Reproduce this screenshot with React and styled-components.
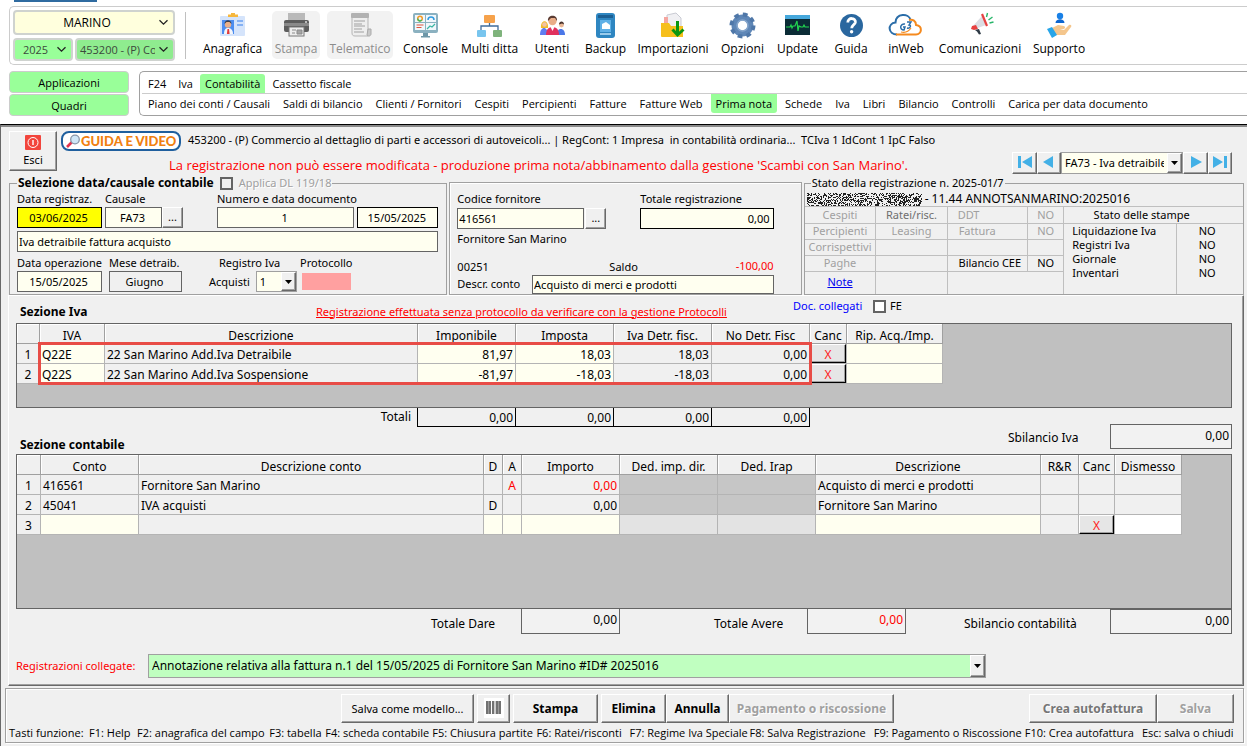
import React, { useState } from 'react';
import styled, { createGlobalStyle, css } from 'styled-components';

const GlobalStyle = createGlobalStyle`
  * {
    box-sizing: border-box;
  }
  body {
    margin: 0;
    background: #fff;
    color: #000;
    font-family: 'Open Sans', 'Noto Sans', sans-serif;
    font-size: 11px;
    line-height: 14px;
    overflow-x: hidden;
  }
  button, input, select {
    font: inherit;
    color: inherit;
    margin: 0;
    border-radius: 0;
  }
`;

/* ---------- top area ---------- */

const TopAccent = styled.div`
  width: 83px;
  height: 2px;
  margin: 0 0 4px 14px;
  background: #2f6ba0;
`;

const Toolbar = styled.header`
  display: flex;
  height: 59px;
  margin-left: 9px;
  padding: 3px 0 0 3px;
  border: 1px solid #ccc;
  border-right: none;
  border-radius: 5px 0 0 5px;
`;

const Selectors = styled.div`
  display: grid;
  grid-template-columns: 60px 100px;
  gap: 3px 2px;
  width: 162px;
  align-content: start;
`;

const PickBox = styled.span`
  display: grid;
  align-items: center;
  grid-column: ${({ $wide }) => ($wide ? '1 / 3' : 'auto')};
  height: ${({ $wide }) => ($wide ? '25px' : '23px')};
  border: 2px solid #cfd3cf;
  border-radius: 4px;
  background: ${({ $bg }) => $bg};
  svg {
    grid-area: 1 / 1;
    justify-self: end;
    margin-right: 4px;
    pointer-events: none;
  }
`;

const PickSelect = styled.select`
  grid-area: 1 / 1;
  appearance: none;
  border: none;
  background: transparent;
  width: 100%;
  min-width: 0;
  height: 19px;
  padding: 0 18px 0 ${({ $pad }) => $pad || 4}px;
  color: ${({ $dark }) => ($dark ? '#000' : '#3c4a3c')};
  font-size: ${({ $dark }) => ($dark ? 12 : 11)}px;
  text-align-last: ${({ $dark }) => ($dark ? 'center' : 'left')};
`;

const Divider = styled.span`
  width: 1px;
  height: 47px;
  margin: 2px 14px 0 10px;
  background: #c0c0c0;
`;

const ToolList = styled.nav`
  display: flex;
  gap: 7px;
  padding-top: 1px;
`;

const Tool = styled.button`
  display: flex;
  flex-direction: column;
  align-items: center;
  justify-content: space-between;
  width: ${({ $w }) => $w}px;
  height: 48px;
  padding: 1px 0 3px;
  border: none;
  border-radius: 5px;
  background: ${({ disabled }) => (disabled ? '#f2f2f2' : 'transparent')};
  color: ${({ disabled }) => (disabled ? '#8c8c8c' : '#000')};
  font-size: 12px;
  white-space: nowrap;
`;

const NavArea = styled.div`
  display: flex;
  gap: 10px;
  margin: 6px 0 8px 9px;
`;

const SideButtons = styled.div`
  display: flex;
  flex-direction: column;
  gap: 1px;
  width: 120px;
`;

const SideButton = styled.button`
  height: 22px;
  padding: 1px 0 0;
  border: 1px solid #ccc;
  border-radius: 4px;
  background: #99ff99;
`;

const TabBox = styled.div`
  flex: 1;
  height: 45px;
  padding-top: 2px;
  border: 1px solid #a0a0a0;
  border-right: none;
  border-radius: 5px 0 0 5px;
`;

const TabRow = styled.nav`
  display: flex;
  gap: ${({ $line }) => ($line ? 2 : 3)}px;
  margin-left: 2px;
  padding-left: 1px;
  border-bottom: ${({ $line }) => ($line ? '1px solid #ccc' : 'none')};
`;

const Tab = styled.a`
  padding: 3px 5px 2px;
  border-radius: ${({ $low }) => ($low ? '0 0 3px 3px' : '3px 3px 0 0')};
  background: ${({ $active }) => ($active ? '#99ff99' : 'transparent')};
  color: #000;
  text-decoration: none;
  white-space: nowrap;
`;

/* ---------- work area ---------- */

const Work = styled.main`
  padding: 4px 3px 3px 4px;
  background: #f0f0f0;
  border-top: 1px solid #000;
  border-left: 1px solid #696969;
  box-shadow: inset 0 2px 0 #8a8a8a;
  font-family: 'Noto Sans', 'Open Sans', sans-serif;
`;

const raised = css`
  border: 1px solid;
  border-color: #fff #696969 #696969 #fff;
  box-shadow: inset -1px -1px 0 #a0a0a0;
  background: #f0f0f0;
`;

const Head = styled.div`
  display: flex;
  gap: 4px;
  height: 45px;
  padding: 2px 12px 0 4px;
`;

const ExitButton = styled.button`
  ${raised}
  display: flex;
  flex-direction: column;
  align-items: center;
  justify-content: space-between;
  width: 48px;
  height: 40px;
  padding: 3px 0;
`;

const HeadMain = styled.div`
  flex: 1;
  min-width: 0;
`;

const HeadLine = styled.div`
  display: flex;
  align-items: ${({ $big }) => ($big ? 'center' : 'flex-start')};
  height: 21px;
  gap: 7px;
  line-height: 18px;
  white-space: pre;
`;

const GuideLink = styled.a`
  display: flex;
  align-items: center;
  width: 120px;
  height: 20px;
  padding-left: 3px;
  border: 2px solid #1f5f9e;
  border-radius: 8px;
  background: #fff;
  color: #f08010;
  font: 900 13px/16px Lato, sans-serif;
  text-decoration: none;
`;

const Warning = styled.strong`
  flex: 1;
  padding: 4px 0 0 108px;
  color: #f00;
  font-family: 'Open Sans', 'Noto Sans', sans-serif;
  font-size: 13px;
  font-weight: 400;
`;

const RecordNav = styled.div`
  display: flex;
  height: 22px;
`;

const FlatButton = styled.button`
  ${raised}
  display: flex;
  align-items: center;
  justify-content: center;
  width: ${({ $w }) => $w}px;
  height: ${({ $h }) => $h || 21}px;
  padding: 0 0 2px;
  flex: none;
`;

const Combo = styled.span`
  display: grid;
  align-items: center;
  width: ${({ $w }) => ($w ? $w + 'px' : 'auto')};
  flex: ${({ $grow }) => ($grow ? '0 1 838px' : 'none')};
  height: ${({ $h }) => $h}px;
  border: 1px solid;
  border-color: #696969 #fff #fff #696969;
  outline: ${({ $sunken }) => ($sunken ? '1px solid #a0a0a0' : 'none')};
  outline-offset: -1px;
  background: ${({ $bg }) => $bg || '#fffff0'};
`;

const ComboSelect = styled.select`
  grid-area: 1 / 1;
  appearance: none;
  width: 100%;
  min-width: 0;
  height: 100%;
  padding: 0 18px 0 3px;
  border: none;
  background: transparent;
  font-size: ${({ $size }) => $size || 11}px;
`;

const ComboArrow = styled.span`
  ${raised}
  grid-area: 1 / 1;
  justify-self: end;
  display: flex;
  align-items: center;
  justify-content: center;
  width: 15px;
  height: 100%;
  pointer-events: none;
`;

const Panels = styled.div`
  display: grid;
  grid-template-columns: 438fr 352fr 440fr;
  gap: 2px;
  padding-left: 4px;
`;

const Panel = styled.fieldset`
  min-width: 0;
  margin: ${({ $plain }) => ($plain ? '8px 0 0' : '0')};
  padding: ${({ $pad }) => $pad || '0 8px 2px 7px'};
  border: 1px solid #a0a0a0;
  box-shadow: ${({ $plain }) => ($plain ? 'inset 1px 1px 0 #fff' : 'none')};
`;

const Legend = styled.legend`
  display: flex;
  align-items: center;
  gap: 6px;
  height: 18px;
  padding: 0 1px;
  margin-left: ${({ $left }) => $left || 0}px;
  white-space: nowrap;
`;

const Line = styled.div`
  display: flex;
  align-items: ${({ $align }) => $align || 'flex-end'};
  gap: ${({ $gap }) => $gap ?? 3}px;
  margin-top: ${({ $top }) => $top || 0}px;
`;

const Field = styled.div`
  display: flex;
  flex-direction: column;
  width: ${({ $w }) => ($w ? $w + 'px' : 'auto')};
  flex: ${({ $w }) => ($w ? 'none' : 1)};
  min-width: 0;
  margin-left: ${({ $left }) => $left || 0}px;
`;

const Label = styled.label`
  height: ${({ $h }) => $h || 15}px;
  padding-left: ${({ $indent }) => $indent || 0}px;
  line-height: 14px;
  white-space: nowrap;
  text-align: ${({ $align }) => $align || 'left'};
  color: ${({ $color }) => $color || '#000'};
`;

const Input = styled.input`
  display: block;
  width: 100%;
  min-width: 0;
  height: ${({ $h }) => $h || 21}px;
  padding: 0 3px 0 1px;
  border: 1px solid ${({ $strong }) => ($strong ? '#000' : '#646464')};
  background: ${({ $bg }) => $bg || '#fffff0'};
  text-align: ${({ $align }) => $align || 'left'};
`;

const Check = styled.input`
  appearance: none;
  flex: none;
  width: 13px;
  height: 13px;
  border: 2px solid #646464;
  background: ${({ disabled }) => (disabled ? '#f0f0f0' : '#fff')};
`;

const CheckLabel = styled.label`
  color: ${({ $off }) => ($off ? '#a0a0a0' : '#000')};
  text-shadow: ${({ $off }) => ($off ? '1px 1px 0 #fff' : 'none')};
`;

const Protocol = styled.output`
  display: block;
  width: 49px;
  height: 17px;
  margin: 2px 0 2px 2px;
  background: #ffa0a0;
`;

const StatusLine = styled.div`
  display: flex;
  align-items: center;
  gap: 3px;
  height: 14px;
  padding-left: 2px;
  font-size: 12px;
  white-space: nowrap;
`;

const StatusGrid = styled.div`
  display: grid;
  grid-template-columns: 260fr 179fr;
  border-top: 1px solid #bfbfbf;
`;

const StatusTable = styled.table`
  width: 100%;
  table-layout: fixed;
  border-collapse: collapse;
  td {
    height: 16px;
    padding: 0;
    border-right: 1px solid #bfbfbf;
    border-bottom: 1px solid #bfbfbf;
    color: #a0a0a0;
    text-align: center;
    line-height: 14px;
    white-space: nowrap;
  }
  tr:last-child td {
    height: 23px;
    padding-bottom: 2px;
    border-bottom: none;
  }
`;

const StatusCell = styled.td`
  && {
    color: ${({ $color }) => $color || '#a0a0a0'};
    text-align: ${({ $align }) => $align || 'center'};
    padding-left: ${({ $pad }) => $pad || 0}px;
  }
`;

const PrintTable = styled.table`
  width: 100%;
  height: 87px;
  table-layout: fixed;
  border-collapse: collapse;
  th {
    height: 16px;
    padding: 0 24px 0 0;
    border-bottom: 1px solid #bfbfbf;
    font-weight: 400;
  }
  td {
    height: 14px;
    padding: 0 0 0 8px;
    line-height: 14px;
  }
  td:last-child {
    padding: 0 6px 0 0;
    border-left: 1px solid #bfbfbf;
    text-align: center;
  }
`;

/* ---------- sections ---------- */

const Sections = styled.section`
  margin-left: 3px;
  padding: 0 11px 7px 7px;
  border: 1px solid;
  border-color: #fff #696969 #696969 #fff;
  box-shadow: inset -1px -1px 0 #a0a0a0;
`;

const SectionHead = styled.div`
  display: flex;
  align-items: center;
  height: 27px;
  padding-top: 4px;
`;

const SectionTitle = styled.h2`
  margin: 0;
  padding-left: ${({ $pad }) => $pad ?? 4}px;
  font-size: 12px;
  line-height: 18px;
  font-weight: 700;
  width: ${({ $w }) => ($w ? $w + 'px' : 'auto')};
`;

const AlertLink = styled.a`
  width: 477px;
  color: #f00;
  white-space: nowrap;
`;

const DocLinks = styled.div`
  display: flex;
  align-items: center;
  gap: 4px;
  height: 13px;
  margin-bottom: 11px;
`;

const DocLink = styled.a`
  width: 76px;
  color: #00f;
  text-decoration: none;
  white-space: nowrap;
`;

const GridFrame = styled.div`
  position: relative;
  min-height: ${({ $h }) => $h}px;
  border: 1px solid #646464;
  background: #c0c0c0;
`;

const GridTable = styled.table`
  table-layout: fixed;
  border-collapse: separate;
  border-spacing: 0;
  width: ${({ $w }) => $w}px;
  font-size: 12px;
`;

const Th = styled.th`
  height: 20px;
  padding: 4px 0 0;
  border-right: 1px solid #a0a0a0;
  border-bottom: 1px solid #a0a0a0;
  box-shadow: inset 1px 1px 0 #fff;
  background: #f0f0f0;
  font-weight: 400;
  line-height: 15px;
  white-space: nowrap;
`;

const Td = styled.td`
  height: 20px;
  padding: ${({ $button }) => ($button ? '0' : '3px 2px 0')};
  border-right: 1px solid #b4b4b4;
  border-bottom: 1px solid #b4b4b4;
  background: ${({ $bg }) => $bg || '#f0f0f0'};
  color: ${({ $color }) => $color || '#000'};
  text-align: ${({ $align }) => $align || 'left'};
  line-height: 16px;
  white-space: nowrap;
`;

const CancelButton = styled.button`
  display: block;
  width: 100%;
  height: 19px;
  padding: 3px 0 0;
  border: 1px solid;
  border-color: #fff #000 #000 #fff;
  box-shadow: inset -1px -1px 0 #a0a0a0;
  background: #e6e6e6;
  color: #f22;
  font-size: 12px;
  line-height: 14px;
`;

/* red frame drawn over the rows to check */
const RowsFrame = styled.div`
  position: absolute;
  left: 21px;
  top: 18px;
  width: 774px;
  height: 43px;
  border: 3px solid #e84c46;
  pointer-events: none;
`;

const Between = styled.div`
  display: flex;
  align-items: flex-end;
  justify-content: space-between;
  height: 46px;
`;

const TotalsRow = styled.div`
  display: flex;
  height: 19px;
  margin-bottom: 9px;
  font-size: 12px;
`;

const TotalsLabel = styled.span`
  width: 401px;
  padding: 2px 6px 0 0;
  text-align: right;
`;

const Total = styled.output`
  width: 98px;
  padding: 1px 2px 0 0;
  border-right: 1px solid #000;
  border-bottom: 1px solid #000;
  text-align: right;
  line-height: 17px;
  &:nth-child(2) {
    width: 99px;
    border-left: 1px solid #000;
  }
`;

const Balance = styled.div`
  display: flex;
  align-items: center;
  margin: ${({ $margin }) => $margin || 0};
  font-size: 12px;
`;

const BalanceLabel = styled.span`
  width: ${({ $w }) => $w}px;
  padding-top: ${({ $low }) => ($low ? 5 : 2)}px;
  white-space: nowrap;
`;

const BalanceBox = styled.output`
  width: ${({ $w }) => $w || 122}px;
  height: 25px;
  padding: 2px 2px 0 0;
  border: 1px solid #646464;
  border-top-width: ${({ $open }) => ($open ? 0 : 1)}px;
  background: #f2f2f2;
  color: ${({ $color }) => $color || '#000'};
  text-align: right;
  line-height: 18px;
`;

const BalanceRow = styled.div`
  display: flex;
  align-items: flex-start;
  justify-content: flex-end;
  height: 45px;
`;

const LinkedRow = styled.div`
  display: flex;
  align-items: center;
`;

const LinkedLabel = styled.label`
  flex: none;
  width: 132px;
  color: #f00;
`;

const Footer = styled.footer`
  margin-top: 2px;
  padding: 5px 9px 2px 3px;
  border: 1px solid #a0a0a0;
  box-shadow: inset 1px 1px 0 #fff, 1px 1px 0 #fff;
`;

const FooterButtons = styled.div`
  display: flex;
  gap: 3px;
  padding-left: 332px;
`;

const ButtonGroup = styled.div`
  display: flex;
  margin-left: ${({ $end }) => ($end ? 'auto' : '0')};
`;

const ActionButton = styled.button`
  ${raised}
  width: ${({ $w }) => $w}px;
  height: 29px;
  padding: 0;
  font-size: ${({ $bold }) => ($bold ? 12 : 11)}px;
  font-weight: ${({ $bold }) => ($bold ? 700 : 400)};
  white-space: nowrap;
  &:disabled {
    color: ${({ $dim }) => $dim || '#a0a0a0'};
    text-shadow: 1px 1px 0 #fff;
  }
`;

const KeyHints = styled.div`
  display: grid;
  grid-template-columns: ${({ $cols }) => $cols};
  margin-top: 3px;
  font-family: 'Open Sans', 'Noto Sans', sans-serif;
  line-height: 14px;
  white-space: pre;
`;

/* ---------- icons ---------- */

const Chevron = () => (
  <svg width="11" height="7" viewBox="0 0 11 7" fill="none" stroke="#222" strokeWidth="1.3">
    <path d="M1.5 1.2 5.5 5.2 9.5 1.2" />
  </svg>
);

const Caret = () => (
  <svg width="7" height="4" viewBox="0 0 7 4"><path d="M0 0h7L3.500 4z" /></svg>
);

const icons = {
  anagrafica: (
    <>
      <rect x="1" y="4" width="25" height="20" rx="1" fill="#d5e4fb" />
      <rect x="3" y="8" width="12" height="14" fill="#4c8df0" />
      <path d="M5 22c0-5 2-6 4-6s5 1 5 6z" fill="#f4f6fa" />
      <circle cx="9" cy="12.500" r="3.200" fill="#eab08a" />
      <path d="M5.500 12c0-5 7-5 7 0l-2-2h-3z" fill="#3b3f4c" />
      <path d="M8.500 17h1.500l.6 5h-2.700z" fill="#e23b3b" />
      <path d="M18 9h6M18 13h6" stroke="#6aa0f2" strokeWidth="1.300" />
      <path d="M9 2.500h3V1h4v1.500h3V5H9z" fill="#f6b73c" />
    </>
  ),
  stampa: (
    <>
      <rect x="5" y="1" width="17" height="7" fill="#b9b9b9" />
      <rect x="1" y="8" width="25" height="12" rx="2" fill="#5d5d5d" />
      <rect x="1" y="11" width="25" height="3" fill="#8a8a8a" />
      <circle cx="23" cy="10" r="1" fill="#ddd" />
      <rect x="6" y="15" width="15" height="9" fill="#ededed" stroke="#777" />
      <path d="M9 18h4M9 21h3M14 18h5v4h-5z" stroke="#8b8b8b" fill="#a5a5a5" />
    </>
  ),
  telematico: (
    <>
      <path d="M5 2h16v22H8c-2 0-3-1-3-3z" fill="#eee" stroke="#b5b5b5" />
      <rect x="4" y="1" width="18" height="5" rx="1" fill="#b2b2b2" />
      <path d="M7 9h11M7 12h8M7 14h11M7 17h8M7 20h10" stroke="#a0a0a0" />
      <path d="M21 17h3v5c0 2-3 3-4 1z" fill="#c9c9c9" stroke="#aaa" />
    </>
  ),
  console: (
    <>
      <rect x="1" y="1" width="25" height="20" rx="2" fill="#8bb1c0" />
      <rect x="3" y="3" width="10" height="7" fill="#f1f7fb" />
      <rect x="14" y="3" width="10" height="7" fill="#f1f7fb" />
      <rect x="3" y="11" width="10" height="7" fill="#f1f7fb" />
      <rect x="14" y="11" width="10" height="7" fill="#f1f7fb" />
      <circle cx="8" cy="6.500" r="2.300" fill="none" stroke="#f39a27" strokeWidth="1.500" />
      <path d="M5.700 6.500a2.300 2.300 0 0 0 4 1.600" fill="none" stroke="#4cb859" strokeWidth="1.500" />
      <path d="M16 8a3 3 0 0 1 6 0" fill="none" stroke="#2f9be0" strokeWidth="1.500" />
      <path d="M4.500 13h7M4.500 15.500h5" stroke="#e0543f" strokeWidth="1.200" />
      <path d="m15 17 3-3 2 1 3-3" stroke="#39b6a5" strokeWidth="1.200" fill="none" />
      <path d="M11 21h5v3h2v1.500H9V24h2z" fill="#6e97a8" />
    </>
  ),
  ditta: (
    <>
      <path d="M13.500 10v4M5 18v-4h17v4" stroke="#3f6c9c" fill="none" strokeWidth="1.300" />
      <rect x="8" y="3" width="11" height="8" rx="1" fill="#f6a24b" />
      <rect x="1" y="18" width="9" height="7" rx="1" fill="#78c5ee" />
      <rect x="17" y="18" width="9" height="7" rx="1" fill="#7fb37c" />
    </>
  ),
  utenti: (
    <>
      <path d="M1 23c0-5 2-7 4-7s4 2 4 7z" fill="#5f7df0" />
      <path d="M2 16c-1-9 8-9 7 0z" fill="#f2bb2b" />
      <circle cx="5.500" cy="12.500" r="2.300" fill="#f3c3a2" />
      <path d="M18 23c0-5 2-6 4-6s4 2 4 6z" fill="#4b77e8" />
      <circle cx="22.500" cy="13" r="2.400" fill="#eab795" />
      <path d="M20 12.500c0-4 5-4 5 0l-2-1z" fill="#4a342e" />
      <path d="M7 23c0-6 3-8 6.500-8s6.500 2 6.500 8z" fill="#e0305e" />
      <path d="M11.500 15h4l-2 4z" fill="#fff" />
      <circle cx="13.500" cy="9" r="4.200" fill="#e9ad88" />
      <path d="M9 9c-1-7 10-7 9 0l-2-3h-4z" fill="#5a3b33" />
    </>
  ),
  backup: (
    <>
      <rect x="4" y="1" width="19" height="25" rx="3" fill="#2e86c1" />
      <rect x="6" y="3" width="15" height="3" fill="#1c5f93" />
      <rect x="8" y="8" width="11" height="12" fill="#5fb0e6" />
      <path d="m10 12 4-2 4 3v4h-8z" fill="#fff" />
      <path d="M8 22h11" stroke="#bfe2f8" strokeWidth="1.500" />
    </>
  ),
  importazioni: (
    <>
      <path d="M7 3 16 1l5 5v10H7z" fill="#f0f0f3" stroke="#c9cbd3" />
      <path d="M4 5h4v9H4z" fill="#f5a6a0" />
      <path d="M1 11h8l2 3h12v11H2a1 1 0 0 1-1-1z" fill="#f6bf1c" />
      <path d="M17.500 9v13M12.500 17.500l5 5.500 6-5.500" fill="none" stroke="#0a960f" strokeWidth="3" />
    </>
  ),
  opzioni: (
    <>
      <circle cx="13.500" cy="13.500" r="8" fill="none" stroke="#5f87b7" strokeWidth="6" />
      <circle cx="13.500" cy="13.500" r="11" fill="none" stroke="#4f77a8" strokeWidth="4" strokeDasharray="4.600 4.040" />
      <circle cx="13.500" cy="13.500" r="5.500" fill="none" stroke="#86a6cc" strokeWidth="1.500" />
    </>
  ),
  update: (
    <>
      <rect x="1" y="3" width="25" height="20" fill="#0b2c36" />
      <rect x="1" y="3" width="25" height="4" fill="#46a8dc" />
      <path d="M2 15h4l1-2 1 3 1-2h2l2-5 1 10 1-5 2 1h2l1-2 1 2h4" fill="none" stroke="#22d650" strokeWidth="1.200" />
    </>
  ),
  guida: (
    <>
      <circle cx="13.500" cy="13.500" r="11.500" fill="#2a679f" />
      <path d="M9.800 10.500c0-5.500 8-5 7.600-.3-.3 2.600-3.600 2.800-3.700 6" fill="none" stroke="#fff" strokeWidth="2.800" />
      <circle cx="13.600" cy="19.800" r="1.700" fill="#fff" />
    </>
  ),
  comunicazioni: (
    <>
      <path d="M5 15 15 4l4 9-11 4z" fill="#dcdde3" />
      <path d="m5 14 4-1 2 4-4 1-3-1z" fill="#e84040" />
      <path d="m15 2 5 12" stroke="#e64242" strokeWidth="2.200" />
      <path d="m8 18 4-1 2 5-2 .5-2-3z" fill="#2e3a45" />
      <path d="m19.500 5 1-4M21.500 8l4-3M22.500 11l4-1" stroke="#28b66a" strokeWidth="1.400" />
    </>
  ),
  supporto: (
    <>
      <circle cx="14" cy="4" r="3.200" fill="#1980e6" />
      <path d="M9.500 11c0-5 9-5 9 0z" fill="#0d66d0" />
      <path d="m6 16 6-3 6 1c2 1 1 3-1 3h-3l4 1 5-5c2-1 3 1 2 2l-6 8H10z" fill="#f4c68d" />
      <path d="m1 17 5-2 5 8-5 3z" fill="#27a5e8" />
    </>
  ),
};

const ToolIcon = ({ name }) =>
  name === 'inweb' ? (
    <svg width="36" height="26" viewBox="0 0 36 26" fill="none" strokeWidth="2">
      <path d="M9 22.500c-9 0-10-11-1.500-12C8 1 21 1 22.500 8" stroke="#2b6da8" />
      <path d="M21 8c4-1 7 1 7 5 7 1 6 9.500 0 9.500H8" stroke="#f58a1e" />
      <path d="M17 12c-5-1-6 6-1 6l1-3h-2" stroke="#2b6da8" strokeWidth="1.500" />
      <path d="M19 10h4l-2 3c3 0 1 4-2 3" stroke="#2b6da8" strokeWidth="1.400" />
      <path d="M13 20c4 1 8-1 10-4" stroke="#f58a1e" strokeWidth="1.200" />
    </svg>
  ) : (
    <svg width="27" height="27" viewBox="0 0 27 27">{icons[name]}</svg>
  );

const PowerIcon = () => (
  <svg width="16" height="15" viewBox="0 0 16 15" fill="none">
    <rect width="16" height="15" rx="1" fill="#f2453c" />
    <circle cx="8" cy="7.500" r="5" stroke="#fff" strokeWidth="1" />
    <path d="M8 5v5" stroke="#fff" strokeWidth="1.400" />
  </svg>
);

const LensIcon = () => (
  <svg width="15" height="14" viewBox="0 0 15 14">
    <path d="m1 13 5-5" stroke="#e2334d" strokeWidth="2.600" />
    <circle cx="9" cy="5.500" r="4.300" fill="#cfe6f7" stroke="#8795a8" strokeWidth="1.300" />
  </svg>
);

const arrows = {
  first: 'M1 1h3v12H1zM15 1v12L5 7z',
  prev: 'M12 1v12L2 7z',
  next: 'M3 1v12l11-6z',
  last: 'M1 1v12l10-6zM12 1h3v12h-3z',
};

const Arrow = ({ kind }) => (
  <svg width="16" height="14" viewBox="0 0 16 14"><path d={arrows[kind]} fill="#43b0e6" /></svg>
);

const BarcodeIcon = () => (
  <svg width="20" height="20" viewBox="0 0 20 20">
    <rect width="20" height="20" fill="#fff" />
    <path d="M3 3v13M6 3v13M9 3v13M13 3v13M16 3v13" stroke="#444" strokeWidth="1.500" />
    <path d="M4.500 3v13M11 3v13M14.500 3v13" stroke="#999" />
  </svg>
);

// speckled strip hiding the operator name
const speckles = (() => {
  let seed = 17;
  let d = '';
  for (let y = 0; y < 13; y++) {
    for (let x = 0; x < 115; x++) {
      seed = (seed * 9301 + 49297) % 233280;
      if (seed / 233280 > 0.55) d += `M${x} ${y}h1v1h-1z`;
    }
  }
  return d;
})();

const Redacted = () => (
  <svg width="115" height="13" viewBox="0 0 115 13" shapeRendering="crispEdges">
    <path d={speckles} fill="#222" />
  </svg>
);

/* ---------- data ---------- */

const tools = [
  ['anagrafica', 'Anagrafica', 65],
  ['stampa', 'Stampa', 48, true],
  ['telematico', 'Telematico', 66, true],
  ['console', 'Console', 51],
  ['ditta', 'Multi ditta', 63],
  ['utenti', 'Utenti', 48],
  ['backup', 'Backup', 45],
  ['importazioni', 'Importazioni', 76],
  ['opzioni', 'Opzioni', 49],
  ['update', 'Update', 47],
  ['guida', 'Guida', 46],
  ['inweb', 'inWeb', 50],
  ['comunicazioni', 'Comunicazioni', 84],
  ['supporto', 'Supporto', 60],
];

const areaTabs = ['F24', 'Iva', 'Contabilità', 'Cassetto fiscale'];
const pageTabs = [
  'Piano dei conti / Causali', 'Saldi di bilancio', 'Clienti / Fornitori', 'Cespiti', 'Percipienti',
  'Fatture', 'Fatture Web', 'Prima nota', 'Schede', 'Iva', 'Libri', 'Bilancio', 'Controlli',
  'Carica per data documento',
];

const ivaCols = [
  ['', 23], ['IVA', 65], ['Descrizione', 313], ['Imponibile', 98], ['Imposta', 98],
  ['Iva Detr. fisc.', 98], ['No Detr. Fisc', 98], ['Canc', 37], ['Rip. Acq./Imp.', 96],
];
const ivaRows = [
  ['Q22E', '22 San Marino Add.Iva Detraibile', '81,97', '18,03', '18,03', '0,00'],
  ['Q22S', '22 San Marino Add.Iva Sospensione', '-81,97', '-18,03', '-18,03', '0,00'],
];

const contoCols = [
  ['', 24], ['Conto', 98], ['Descrizione conto', 345], ['D', 19], ['A', 19], ['Importo', 98],
  ['Ded. imp. dir.', 98], ['Ded. Irap', 98], ['Descrizione', 225], ['R&R', 38], ['Canc', 36], ['Dismesso', 67],
];
const contoRows = [
  { conto: '416561', nome: 'Fornitore San Marino', a: 'A', importo: '0,00', color: '#f00', descr: 'Acquisto di merci e prodotti' },
  { conto: '45041', nome: 'IVA acquisti', d: 'D', importo: '0,00', descr: 'Fornitore San Marino' },
];

const prints = ['Liquidazione Iva', 'Registri Iva', 'Giornale', 'Inventari'];

const hints = [
  ['Tasti funzione:', 80], ['F1: Help', 48], ['F2: anagrafica del campo', 132], ['F3: tabella', 56],
  ['F4: scheda contabile', 107], ['F5: Chiusura partite', 104], ['F6: Ratei/risconti', 93],
  ['F7: Regime Iva Speciale', 120], ['F8: Salva Registrazione', 124],
  ['F9: Pagamento o Riscossione', 151], ['F10: Crea autofattura', 117], ['Esc: salva o chiudi', 92],
];

const CREAM = '#fffff0';

/* ---------- parts ---------- */

const DropDown = ({ id, label, value, size, ...rest }) => (
  <Combo {...rest}>
    <ComboSelect id={id} aria-label={label} $size={size} defaultValue={value}>
      <option>{value}</option>
    </ComboSelect>
    <ComboArrow><Caret /></ComboArrow>
  </Combo>
);

const GridHead = ({ cols }) => (
  <>
    <colgroup>{cols.map(([, w], i) => <col key={i} style={{ width: w }} />)}</colgroup>
    <thead>
      <tr>{cols.map(([name], i) => <Th key={i} scope="col">{name}</Th>)}</tr>
    </thead>
  </>
);

const TopBar = () => (
  <Toolbar>
    <Selectors>
      <PickBox $wide $bg="#ffffdd">
        <PickSelect $dark aria-label="Ditta"><option>MARINO</option></PickSelect>
        <Chevron />
      </PickBox>
      <PickBox $bg="#99ff99">
        <PickSelect $pad={8} aria-label="Anno"><option>2025</option></PickSelect>
        <Chevron />
      </PickBox>
      <PickBox $bg="#8fec8f">
        <PickSelect $pad={3} aria-label="Attività"><option>453200 - (P) Commercio</option></PickSelect>
        <Chevron />
      </PickBox>
    </Selectors>
    <Divider />
    <ToolList>
      {tools.map(([icon, name, w, off]) => (
        <Tool key={icon} $w={w} disabled={off}>
          <ToolIcon name={icon} />
          {name}
        </Tool>
      ))}
    </ToolList>
  </Toolbar>
);

const Navigation = () => {
  const [area, setArea] = useState('Contabilità');
  const [page, setPage] = useState('Prima nota');

  return (
    <NavArea>
      <SideButtons>
        <SideButton>Applicazioni</SideButton>
        <SideButton>Quadri</SideButton>
      </SideButtons>
      <TabBox>
        <TabRow $line>
          {areaTabs.map((t) => (
            <Tab key={t} href="#" $active={t === area} onClick={() => setArea(t)}>{t}</Tab>
          ))}
        </TabRow>
        <TabRow>
          {pageTabs.map((t) => (
            <Tab key={t} href="#" $low $active={t === page} onClick={() => setPage(t)}>{t}</Tab>
          ))}
        </TabRow>
      </TabBox>
    </NavArea>
  );
};

const WorkHead = () => (
  <Head>
    <ExitButton><PowerIcon />Esci</ExitButton>
    <HeadMain>
      <HeadLine>
        <GuideLink href="#"><LensIcon />GUIDA E VIDEO</GuideLink>
        <span>{'453200 - (P) Commercio al dettaglio di parti e accessori di autoveicoli... | RegCont: 1 Impresa  in contabilità ordinaria...  TCIva 1 IdCont 1 IpC Falso'}</span>
      </HeadLine>
      <HeadLine $big>
        <Warning>La registrazione non può essere modificata - produzione prima nota/abbinamento dalla gestione 'Scambi con San Marino'.</Warning>
        <RecordNav>
          <FlatButton $w={25} $h={22} aria-label="Primo"><Arrow kind="first" /></FlatButton>
          <FlatButton $w={24} $h={22} aria-label="Precedente"><Arrow kind="prev" /></FlatButton>
          <DropDown label="Causale registrata" value="FA73 - Iva detraibile fattura" $w={122} $h={22} $sunken />
          <FlatButton $w={25} $h={22} aria-label="Successivo"><Arrow kind="next" /></FlatButton>
          <FlatButton $w={24} $h={22} aria-label="Ultimo"><Arrow kind="last" /></FlatButton>
        </RecordNav>
      </HeadLine>
    </HeadMain>
  </Head>
);

const CausalePanel = () => (
  <Panel>
    <Legend>
      <SectionTitle as="b" $pad={0}>Selezione data/causale contabile</SectionTitle>
      <Check type="checkbox" id="dl" disabled />
      <CheckLabel htmlFor="dl" $off>Applica DL 119/18</CheckLabel>
    </Legend>
    <Line>
      <Field $w={85}>
        <Label htmlFor="datareg">Data registraz.</Label>
        <Input id="datareg" defaultValue="03/06/2025" $strong $bg="#ff0" $align="center" />
      </Field>
      <Field $w={78}>
        <Label htmlFor="causale">Causale</Label>
        <Line $gap={0}>
          <Input id="causale" defaultValue="FA73" $align="center" />
          <FlatButton $w={21} aria-label="Cerca causale">...</FlatButton>
        </Line>
      </Field>
      <Field $left={31}>
        <Label htmlFor="numdoc">Numero e data documento</Label>
        <Line>
          <Input id="numdoc" defaultValue="1" $align="center" />
          <Field $w={81}>
            <Input aria-label="Data documento" defaultValue="15/05/2025" $strong $align="center" />
          </Field>
        </Line>
      </Field>
    </Line>
    <Line $top={3}>
      <Input aria-label="Descrizione causale" defaultValue="Iva detraibile fattura acquisto" />
    </Line>
    <Line $top={4}>
      <Field $w={85}>
        <Label htmlFor="dataop">Data operazione</Label>
        <Input id="dataop" defaultValue="15/05/2025" $align="center" />
      </Field>
      <Field $w={73} $left={4}>
        <Label htmlFor="mese">Mese detraib.</Label>
        <Input id="mese" defaultValue="Giugno" $bg="#f0f0f0" $align="center" />
      </Field>
      <Field $w={88} $left={24}>
        <Label htmlFor="registro" $indent={10}>Registro Iva</Label>
        <Line $gap={6} $align="center">
          <span>Acquisti</span>
          <DropDown id="registro" value="1" $w={41} $h={21} $sunken />
        </Line>
      </Field>
      <Field>
        <Label htmlFor="protocollo">Protocollo</Label>
        <Protocol id="protocollo" />
      </Field>
    </Line>
  </Panel>
);

const FornitorePanel = () => (
  <Panel $plain $pad="9px 27px 0 7px">
    <Line $gap={0}>
      <Field $w={149}>
        <Label htmlFor="fornitore" $h={16}>Codice fornitore</Label>
        <Line $gap={1}>
          <Input id="fornitore" defaultValue="416561" />
          <FlatButton $w={21} aria-label="Cerca fornitore">...</FlatButton>
        </Line>
      </Field>
      <Field $left={34}>
        <Label htmlFor="totale" $h={16}>Totale registrazione</Label>
        <Input id="totale" defaultValue="0,00" $strong $align="right" />
      </Field>
    </Line>
    <Line $top={3}>Fornitore San Marino</Line>
    <Line $top={13} $gap={0}>
      <Field $w={152}>00251</Field>
      <span>Saldo</span>
      <Field><Label as="output" $color="#f00" $align="right">-100,00</Label></Field>
    </Line>
    <Line $top={1} $gap={12} $align="center">
      <Label htmlFor="descr">Descr. conto</Label>
      <Input id="descr" defaultValue="Acquisto di merci e prodotti" $h={19} />
    </Line>
  </Panel>
);

const StatoPanel = () => (
  <Panel $pad="0">
    <Legend $left={6}>Stato della registrazione n. 2025-01/7</Legend>
    <StatusLine>
      <Redacted />
      <span>- 11.44 ANNOTSANMARINO:2025016</span>
    </StatusLine>
    <StatusGrid>
      <StatusTable>
        <colgroup>
          <col style={{ width: '27.5%' }} /><col style={{ width: '27.5%' }} /><col style={{ width: '31%' }} /><col />
        </colgroup>
        <tbody>
          <tr><td>Cespiti</td><StatusCell $color="#6e6e6e">Ratei/risc.</StatusCell><StatusCell $align="left" $pad={10}>DDT</StatusCell><td>NO</td></tr>
          <tr><td>Percipienti</td><td>Leasing</td><StatusCell $align="left" $pad={11}>Fattura</StatusCell><td>NO</td></tr>
          <tr><td>Corrispettivi</td><td /><td /><td /></tr>
          <tr><td>Paghe</td><td /><StatusCell $color="#000" $pad={5}>Bilancio CEE</StatusCell><StatusCell $color="#000">NO</StatusCell></tr>
          <tr><td><a href="#note">Note</a></td><td /><td colSpan={2} /></tr>
        </tbody>
      </StatusTable>
      <PrintTable>
        <colgroup><col style={{ width: '63%' }} /><col /></colgroup>
        <thead><tr><th colSpan={2}>Stato delle stampe</th></tr></thead>
        <tbody>
          {prints.map((p) => <tr key={p}><td>{p}</td><td>NO</td></tr>)}
          <tr><td /><td /></tr>
        </tbody>
      </PrintTable>
    </StatusGrid>
  </Panel>
);

const IvaGrid = () => (
  <GridFrame $h={85}>
    <GridTable $w={926}>
      <GridHead cols={ivaCols} />
      <tbody>
        {ivaRows.map(([code, descr, ...nums], i) => (
          <tr key={code}>
            <Td $align="center">{i + 1}</Td>
            <Td $bg={CREAM}>{code}</Td>
            <Td>{descr}</Td>
            {nums.map((n, j) => <Td key={j} $align="right" $bg={j < 2 ? CREAM : null}>{n}</Td>)}
            <Td $button><CancelButton>X</CancelButton></Td>
            <Td $bg={CREAM} />
          </tr>
        ))}
      </tbody>
    </GridTable>
    <RowsFrame />
  </GridFrame>
);

const ContoGrid = () => (
  <GridFrame $h={155}>
    <GridTable $w={1165}>
      <GridHead cols={contoCols} />
      <tbody>
        {contoRows.map((r, i) => (
          <tr key={r.conto}>
            <Td $align="center">{i + 1}</Td>
            <Td>{r.conto}</Td>
            <Td>{r.nome}</Td>
            <Td $align="center">{r.d}</Td>
            <Td $align="center" $color="#f00">{r.a}</Td>
            <Td $align="right" $color={r.color}>{r.importo}</Td>
            <Td $bg="#c6c6c6" />
            <Td $bg="#c6c6c6" />
            <Td>{r.descr}</Td>
            <Td /><Td /><Td />
          </tr>
        ))}
        <tr>
          <Td $align="center">3</Td>
          <Td $bg={CREAM} />
          <Td />
          <Td $bg={CREAM} /><Td $bg={CREAM} /><Td $bg={CREAM} />
          <Td $bg="#e3e3e3" /><Td $bg="#e3e3e3" />
          <Td $bg={CREAM} />
          <Td />
          <Td $button><CancelButton>X</CancelButton></Td>
          <Td $bg="#fff" />
        </tr>
      </tbody>
    </GridTable>
  </GridFrame>
);

const BottomBar = () => (
  <Footer>
    <FooterButtons>
      <ActionButton $w={133}>Salva come modello...</ActionButton>
      <FlatButton $w={33} $h={29} aria-label="Codice a barre"><BarcodeIcon /></FlatButton>
      <ActionButton $w={85} $bold>Stampa</ActionButton>
      <ButtonGroup>
        <ActionButton $w={65} $bold>Elimina</ActionButton>
        <ActionButton $w={63} $bold>Annulla</ActionButton>
        <ActionButton $w={165} $bold disabled>Pagamento o riscossione</ActionButton>
      </ButtonGroup>
      <ButtonGroup $end>
        <ActionButton $w={128} $bold $dim="#767676" disabled>Crea autofattura</ActionButton>
        <ActionButton $w={77} $bold disabled>Salva</ActionButton>
      </ButtonGroup>
    </FooterButtons>
    <KeyHints $cols={hints.map(([, w]) => `minmax(0, ${w}fr)`).join(' ')}>
      {hints.map(([h]) => <span key={h}>{h}</span>)}
    </KeyHints>
  </Footer>
);

const App = () => (
  <>
    <GlobalStyle />
    <TopAccent />
    <TopBar />
    <Navigation />
    <Work>
      <WorkHead />
      <Panels>
        <CausalePanel />
        <FornitorePanel />
        <StatoPanel />
      </Panels>
      <Sections>
        <SectionHead>
          <SectionTitle $w={300}>Sezione Iva</SectionTitle>
          <AlertLink href="#protocolli">Registrazione effettuata senza protocollo da verificare con la gestione Protocolli</AlertLink>
          <DocLinks>
            <DocLink href="#documenti">Doc. collegati</DocLink>
            <Check type="checkbox" id="fe" />
            <CheckLabel htmlFor="fe">FE</CheckLabel>
          </DocLinks>
        </SectionHead>
        <IvaGrid />
        <Between>
          <div>
            <TotalsRow>
              <TotalsLabel>Totali</TotalsLabel>
              {[0, 1, 2, 3].map((n) => <Total key={n}>0,00</Total>)}
            </TotalsRow>
            <SectionTitle>Sezione contabile</SectionTitle>
          </div>
          <Balance $margin="0 0 5px">
            <BalanceLabel $w={102}>Sbilancio Iva</BalanceLabel>
            <BalanceBox>0,00</BalanceBox>
          </Balance>
        </Between>
        <ContoGrid />
        <BalanceRow>
          <Balance>
            <BalanceLabel $w={90} $low>Totale Dare</BalanceLabel>
            <BalanceBox $w={99} $open>0,00</BalanceBox>
          </Balance>
          <Balance $margin="0 0 0 94px">
            <BalanceLabel $w={93} $low>Totale Avere</BalanceLabel>
            <BalanceBox $w={99} $open $color="#f00">0,00</BalanceBox>
          </Balance>
          <Balance $margin="0 0 0 58px">
            <BalanceLabel $w={146} $low>Sbilancio contabilità</BalanceLabel>
            <BalanceBox>0,00</BalanceBox>
          </Balance>
        </BalanceRow>
        <LinkedRow>
          <LinkedLabel htmlFor="collegate">Registrazioni collegate:</LinkedLabel>
          <DropDown
            id="collegate"
            size={12}
            value="Annotazione relativa alla fattura n.1 del 15/05/2025 di Fornitore San Marino #ID# 2025016"
            $grow
            $h={24}
            $bg="#c0ffc0"
            $sunken
          />
        </LinkedRow>
      </Sections>
      <BottomBar />
    </Work>
  </>
);

export default App;
